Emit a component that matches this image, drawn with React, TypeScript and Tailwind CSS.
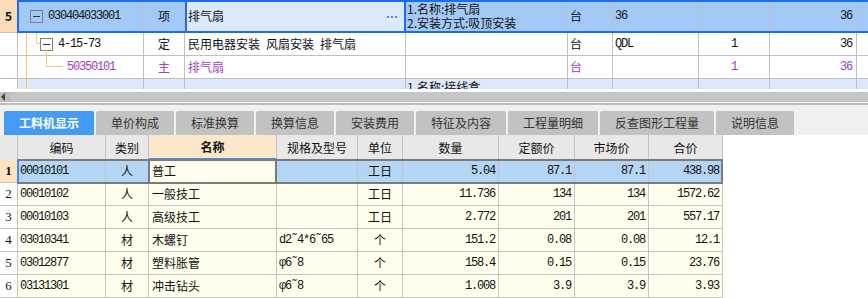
import React from 'react';

const cjk = "font-['Noto_Sans_CJK_SC','Liberation_Sans',sans-serif]";
const mono = "font-['Liberation_Mono','Noto_Sans_CJK_SC',monospace] tracking-[-1.2px]";
const serif = "font-['Liberation_Serif',serif]";

function MinusBox() {
  return (
    <span className="flex h-[13px] w-[13px] shrink-0 items-center justify-center border border-[#808080]">
      <span className="h-px w-[7px] bg-[#333]" />
    </span>
  );
}

function TopGrid() {
  const line = 'border-r border-[#c0c0c0]';
  return (
    <div className={`relative h-[90px] overflow-hidden bg-white text-[12px] text-[#111] ${cjk}`}>
      {/* row 5 (selected) */}
      <div className="flex h-[33px] border-b border-[#c0c0c0] bg-[#a3c9f8]">
        <div className={`flex w-[18px] items-center justify-center bg-[#fcdcb8] font-bold ${line}`}>5</div>
        <div className={`flex w-[126px] items-center pl-[12px] ${line}`}>
          <MinusBox />
          <span className={`ml-[5px] ${mono}`}>030404033001</span>
        </div>
        <div className={`flex w-[41px] items-center justify-center ${line}`}>项</div>
        <div className="flex w-[221px] items-center justify-between border-x-2 border-[#1a6cf2] bg-[#dce9fb] pl-[1px] pr-[7px]">
          <span>排气扇</span>
          <span className="mt-[1px] flex gap-[2px]">
            <i className="h-[2px] w-[2px] bg-[#3a8ee6]" />
            <i className="h-[2px] w-[2px] bg-[#3a8ee6]" />
            <i className="h-[2px] w-[2px] bg-[#3a8ee6]" />
          </span>
        </div>
        <div className={`flex w-[162px] flex-col justify-center pl-[1px] leading-[14px] ${line}`}>
          <span>1.名称:排气扇</span>
          <span>2.安装方式:吸顶安装</span>
        </div>
        <div className={`flex w-[45px] items-center pl-[2px] ${line}`}>台</div>
        <div className={`flex w-[86px] items-center pl-[2px] ${mono} ${line}`}>36</div>
        <div className={`w-[71px] ${line}`} />
        <div className={`flex w-[87px] items-center justify-end pr-[4px] ${mono} ${line}`}>36</div>
        <div className="flex-1" />
      </div>

      {/* row 2 */}
      <div className="flex h-[23px] border-b border-[#c0c0c0]">
        <div className={`w-[18px] ${line}`} />
        <div className={`flex w-[126px] items-center pl-[22px] ${line}`}>
          <MinusBox />
          <span className={`ml-[5px] ${mono}`}>4-15-73</span>
        </div>
        <div className={`flex w-[41px] items-center justify-center ${line}`}>定</div>
        <div className={`flex w-[221px] items-center gap-[6px] pl-[3px] ${line}`}>
          <span>民用电器安装</span>
          <span>风扇安装</span>
          <span>排气扇</span>
        </div>
        <div className={`w-[162px] ${line}`} />
        <div className={`flex w-[45px] items-center pl-[2px] ${line}`}>台</div>
        <div className={`flex w-[86px] items-center pl-[2px] ${mono} ${line}`}>QDL</div>
        <div className={`flex w-[71px] items-center justify-center ${mono} ${line}`}>1</div>
        <div className={`flex w-[87px] items-center justify-end pr-[4px] ${mono} ${line}`}>36</div>
        <div className="flex-1" />
      </div>

      {/* row 3 */}
      <div className="flex h-[23px] border-b border-[#c0c0c0] text-[#a040c0]">
        <div className={`w-[18px] ${line}`} />
        <div className={`flex w-[126px] items-center pl-[49px] ${line}`}>
          <span className={mono}>50350101</span>
        </div>
        <div className={`flex w-[41px] items-center justify-center ${line}`}>主</div>
        <div className={`flex w-[221px] items-center pl-[3px] ${line}`}>排气扇</div>
        <div className={`w-[162px] ${line}`} />
        <div className={`flex w-[45px] items-center pl-[2px] ${line}`}>台</div>
        <div className={`w-[86px] ${line}`} />
        <div className={`flex w-[71px] items-center justify-center ${mono} ${line}`}>1</div>
        <div className={`flex w-[87px] items-center justify-end pr-[4px] ${mono} ${line}`}>36</div>
        <div className="flex-1" />
      </div>

      {/* row 4 (partly visible) */}
      <div className="flex h-[30px] bg-[#dde9fb]">
        <div className={`w-[18px] bg-white ${line}`} />
        <div className={`w-[126px] ${line}`} />
        <div className={`w-[41px] ${line}`} />
        <div className={`w-[221px] ${line}`} />
        <div className={`w-[162px] pl-[1px] pt-[1px] leading-[14px] ${line}`}>1.名称:接线盒</div>
        <div className={`w-[45px] ${line}`} />
        <div className={`w-[86px] ${line}`} />
        <div className={`w-[71px] ${line}`} />
        <div className={`w-[87px] ${line}`} />
        <div className="flex-1" />
      </div>

      {/* tree connectors */}
      <svg className="pointer-events-none absolute left-0 top-0" width="144" height="90">
        <g stroke="#fcc36d" strokeWidth="1" fill="none">
          <path d="M26.5 33 V90" />
          <path d="M36.5 33 V43.5 H40" />
          <path d="M46.5 50 V66.5 H63" />
        </g>
      </svg>

      {/* selection frame */}
      <div className="pointer-events-none absolute left-[17px] right-0 top-0 h-[33px] border-y-2 border-l-2 border-[#1a6cf2]" />
    </div>
  );
}

function ScrollBar() {
  return (
    <div className="flex h-[10px] items-center bg-[#bdbdbd]">
      <span className="ml-[1px] h-0 w-0 border-y-[4px] border-r-[4px] border-y-transparent border-r-[#404040]" />
      <div className="ml-[5px] h-full flex-1 rounded-l-full bg-[#c6c6c6]" />
    </div>
  );
}

const tabs: { label: string; w: string }[] = [
  { label: '工料机显示', w: 'w-[90px]' },
  { label: '单价构成', w: 'w-[78px]' },
  { label: '标准换算', w: 'w-[78px]' },
  { label: '换算信息', w: 'w-[78px]' },
  { label: '安装费用', w: 'w-[78px]' },
  { label: '特征及内容', w: 'w-[90px]' },
  { label: '工程量明细', w: 'w-[90px]' },
  { label: '反查图形工程量', w: 'w-[114px]' },
  { label: '说明信息', w: 'w-[78px]' },
];

function TabBar() {
  return (
    <div className={`flex h-[30px] items-end gap-[2px] bg-[#f0f0f0] pl-[4px] text-[12px] ${cjk}`}>
      {tabs.map((t, i) => (
        <div
          key={t.label}
          className={`flex h-[24px] items-center justify-center rounded-t-[2px] ${t.w} ${
            i === 0 ? 'bg-[#449bf6] font-bold text-white' : 'bg-[#c2c2c2] text-[#333]'
          }`}
        >
          {t.label}
        </div>
      ))}
    </div>
  );
}

const cols: { title: string; w: string; align: string; font: string }[] = [
  { title: '编码', w: 'w-[88px]', align: 'justify-start pl-[2px]', font: mono },
  { title: '类别', w: 'w-[43px]', align: 'justify-center', font: cjk },
  { title: '名称', w: 'w-[128px]', align: 'justify-start pl-[3px]', font: cjk },
  { title: '规格及型号', w: 'w-[81px]', align: 'justify-start pl-[2px]', font: mono },
  { title: '单位', w: 'w-[45px]', align: 'justify-center', font: cjk },
  { title: '数量', w: 'w-[96px]', align: 'justify-end pr-[3px]', font: mono },
  { title: '定额价', w: 'w-[76px]', align: 'justify-end pr-[3px]', font: mono },
  { title: '市场价', w: 'w-[74px]', align: 'justify-end pr-[3px]', font: mono },
  { title: '合价', w: 'w-[74px]', align: 'justify-end pr-[3px]', font: mono },
];

const rows: string[][] = [
  ['00010101', '人', '普工', '', '工日', '5.04', '87.1', '87.1', '438.98'],
  ['00010102', '人', '一般技工', '', '工日', '11.736', '134', '134', '1572.62'],
  ['00010103', '人', '高级技工', '', '工日', '2.772', '201', '201', '557.17'],
  ['03010341', '材', '木螺钉', 'd2˜4*6˜65', '个', '151.2', '0.08', '0.08', '12.1'],
  ['03012877', '材', '塑料胀管', 'φ6˜8', '个', '158.4', '0.15', '0.15', '23.76'],
  ['03131301', '材', '冲击钻头', 'φ6˜8', '个', '1.008', '3.9', '3.9', '3.93'],
];

function ResourceTable() {
  return (
    <div className="relative flex-1 bg-white text-[12px] text-[#111]">
      <div className={`flex h-[25px] ${cjk}`}>
        <div className="w-[18px] border-r border-[#c4c4c4] bg-[#e8e8e8]" />
        {cols.map((c) =>
          c.title === '名称' ? (
            <div
              key={c.title}
              className={`flex items-center justify-center border-b-2 border-r border-b-[#3d8ef0] border-r-[#c4c4c4] bg-[#fde7ca] font-bold ${c.w}`}
            >
              {c.title}
            </div>
          ) : (
            <div
              key={c.title}
              className={`flex items-center justify-center border-r border-[#c4c4c4] bg-[#e8e8e8] ${c.w}`}
            >
              {c.title}
            </div>
          ),
        )}
      </div>

      {rows.map((r, ri) => (
        <div key={r[0]} className="flex h-[23px]">
          <div
            className={`flex w-[18px] items-center justify-center border-b border-r border-[#c4c4c4] text-[13px] ${serif} ${
              ri === 0 ? 'bg-[#fde3c4] font-bold' : 'bg-white'
            }`}
          >
            {ri + 1}
          </div>
          {cols.map((c, ci) => (
            <div
              key={c.title}
              className={`flex items-center overflow-hidden whitespace-nowrap border-b border-r border-[#c4c4c4] ${c.w} ${c.align} ${c.font} ${
                ri === 0 && ci !== 2 ? 'bg-[#b4d5f3]' : 'bg-[#fffeec]'
              }`}
            >
              {r[ci]}
            </div>
          ))}
        </div>
      ))}

      {/* current row + current cell frames */}
      <div className="pointer-events-none absolute left-[17px] top-[24px] h-[25px] w-[706px] border-2 border-[#7b7b7b] border-l-[#3b8cf0]" />
      <div className="pointer-events-none absolute left-[148px] top-[24px] h-[25px] w-[129px] border-2 border-[#7b7b7b]" />
    </div>
  );
}

export default function App() {
  return (
    <div className="flex h-[298px] w-[868px] flex-col overflow-hidden bg-white">
      <TopGrid />
      <div className="h-[3px] bg-white" />
      <ScrollBar />
      <div className="h-[2px] bg-[#f4f4f4]" />
      <div className="h-[2px] bg-[#bdbdbd]" />
      <TabBar />
      <ResourceTable />
    </div>
  );
}
